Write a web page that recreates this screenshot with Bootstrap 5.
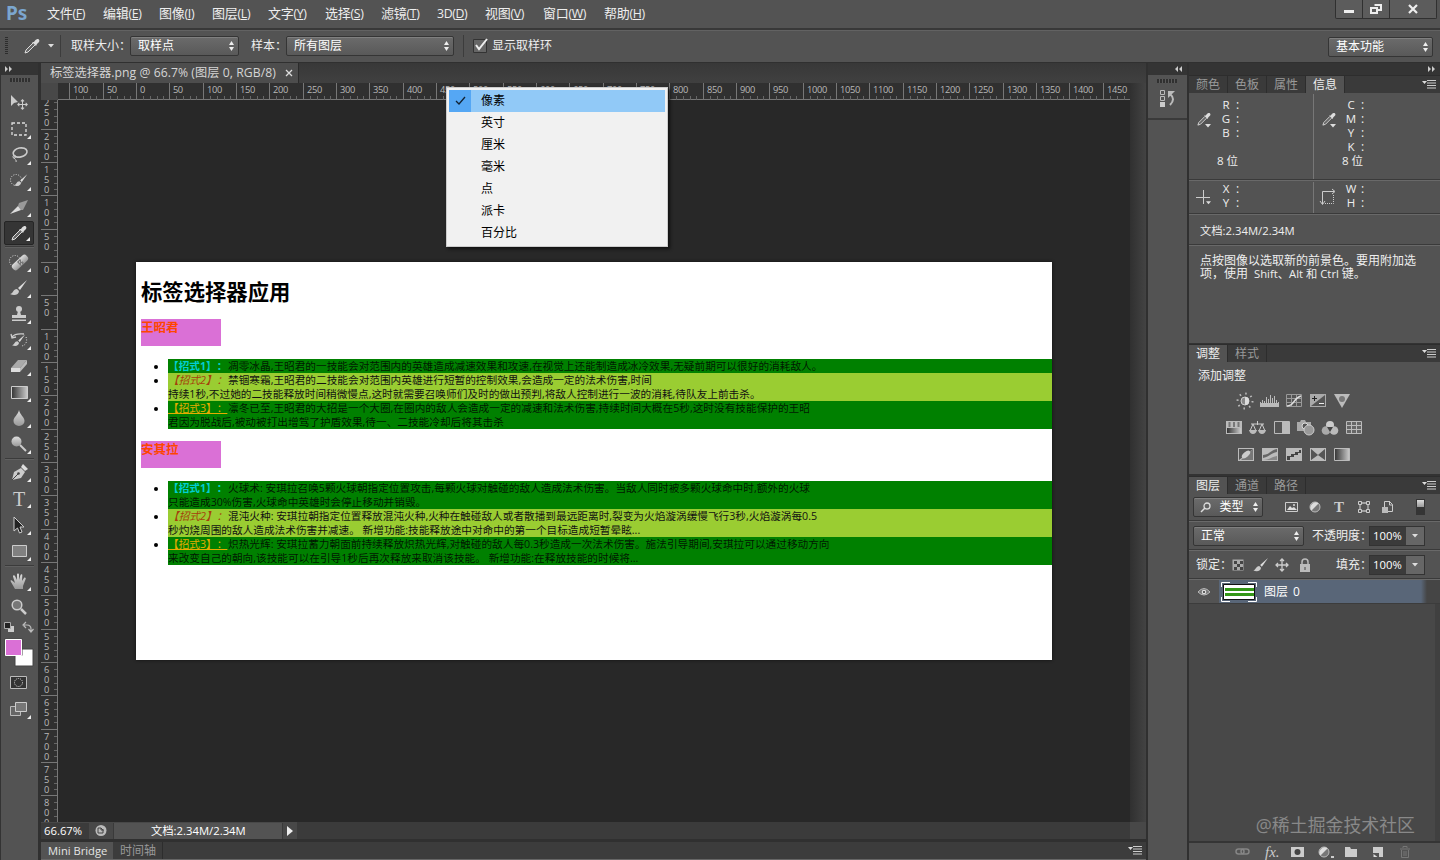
<!DOCTYPE html>
<html lang="zh-CN">
<head>
<meta charset="utf-8">
<meta name="viewport" content="width=device-width, initial-scale=1">
<title>标签选择器.png</title>
<link href="https://cdn.jsdelivr.net/npm/bootstrap@5.3.0/dist/css/bootstrap.min.css" rel="stylesheet">
<style>
body{width:1440px;height:860px;overflow:hidden;background:#535353;color:#eee;font:12px/14px "Open Sans","Noto Sans CJK SC",sans-serif;white-space:nowrap;text-spacing-trim:space-all;font-feature-settings:"chws" 0,"halt" 0}
svg{display:block;flex:none;overflow:visible}
/* menu and options bars */
.menubar{height:28px;padding-left:6px}
.logo{width:41px;color:#7ba6cf;font:bold 19px/26px "Noto Sans",sans-serif}
.menus{display:grid;grid-template-columns:56px 56px 53px 56px 57px 56px 56px 48px 58px 61px 60px;font-size:13px;line-height:26px;letter-spacing:-.2px}
.menus small{font-size:12.3px;letter-spacing:-.4px}
.winbtns{height:19px;border:1px solid #303030;border-top:0;background:#5c5c5c;border-radius:0 0 2px 2px;margin-right:3px}
.winbtns>span{border-right:1px solid #303030;height:18px;width:27px}
.winbtns>span:last-child{width:46px;border:0}
.options{height:35px;border-top:2px solid #383838;border-bottom:1px solid #303030;box-shadow:inset 0 1px #626262}
.selbox{height:20px;border:1px solid #353535;border-radius:2px;background:linear-gradient(#6b6b6b,#595959);box-shadow:inset 0 1px #808080;padding:0 3px 0 7px;display:flex;align-items:center;justify-content:space-between;color:#fff}
.vsep{width:1px;height:22px;background:#3c3c3c}
/* left tool strip */
.strip{width:38px;border-left:1px solid #333}
.striphead{height:12px;background:#343434}
.grip{height:4px;width:20px;background:repeating-linear-gradient(90deg,#303030 0 2px,#5a5a5a 2px 3px)}
.tool{height:26px;width:30px;margin:0 auto 0 3px;display:flex;align-items:center;justify-content:center;position:relative}
.tool::after{content:"";position:absolute;right:3px;bottom:3px;border:2px solid transparent;border-right-color:#eee;border-bottom-color:#eee}
.tool.plain::after{display:none}
.tool.on{background:#353535;border:1px solid #252525;border-radius:2px;height:24px;margin-top:1px;margin-bottom:1px}
.tsep{height:1px;background:#3b3b3b;margin:1px 4px 2px;box-shadow:0 1px #606060}
/* document */
.docwrap{width:1110px;background:#282828;border-left:3px solid #303030;border-right:2px solid #303030}
.tabbar{height:20px;background:linear-gradient(#383838,#404040)}
.doctab{width:258px;height:20px;background:#4d4d4d;border-right:1px solid #2b2b2b;padding:0 6px 0 9px;color:#d5d5d5;font-size:12.2px;letter-spacing:.06px;line-height:20px}
.board{width:1072px;padding:162px 78px 0}
.sheet{height:398px;background:#fff;color:#000;padding:18px 0 0 5px;font-size:10.67px;box-shadow:0 0 3px #111}
.sheet h1{font:bold 21.33px/24px "Open Sans","Noto Sans CJK SC",sans-serif;margin:0 0 15px}
.sheet h3{font:bold 12.5px/18px "Open Sans","Noto Sans CJK SC",sans-serif;margin:0 0 13px;width:80px;height:27px;background:orchid;color:#ff4500}
.sheet ul{margin:0 0 12px;padding-left:27px;line-height:14px}
.sheet li{background:green;color:rgba(0,0,0,.82)}
.sheet li::marker{color:#000}
.sheet li:nth-child(2){background:yellowgreen;color:#111}
.key{display:inline-block;width:60px;height:14px;vertical-align:top}
.sheet li:nth-child(1) .key{color:#00ced1;font-weight:bold}
.sheet li:nth-child(2) .key{color:#a5400c;font-style:italic}
.sheet li:nth-child(3) .key{color:#e5ac00;text-decoration:underline}
.vscroll{width:16px;background:linear-gradient(90deg,#303030,#434343)}
.status{height:17px;background:#484848;font-size:11.3px;color:#fff}
.bottomtabs{height:21px;border-top:3px solid #303030;border-bottom:1px solid #666;background:#3c3c3c;color:#999}
.bottomtabs .act{width:72px;background:#535353;color:#e5e5e5;padding-left:7px;font-size:11.2px;line-height:18px}
/* unit menu */
.unitmenu{left:446px;top:87px;width:222px;height:160px;background:#f1f1f1;border:1px solid #ccc;color:#000;padding:2px;box-shadow:2px 2px 3px #111;z-index:5}
.unitmenu div{height:22px;padding-left:32px;line-height:22px}
.unitmenu .cur{background:linear-gradient(90deg,#55a7f4 22px,#91c9f7 22px);padding-left:0;display:flex;align-items:center}
/* docks */
.dock{width:41px;border-right:2px solid #303030}
.ptabs{height:18px;background:#3a3a3a;border-top:1px solid #2d2d2d;color:#999;line-height:17px}
.ptabs span{width:39px;text-align:center;border-right:1px solid #2d2d2d}
.ptabs .act{background:#535353;color:#eee}
.rule{height:2px;border-top:1px solid #3a3a3a;border-bottom:1px solid #696969}
.half{width:124px}.half+.half{width:127px;border-left:1px solid #777}
.lab{width:14px;text-align:center;font-size:11.5px}
.num{width:56px;height:20px;border:1px solid #333;background:linear-gradient(90deg,#3b3b3b 36px,#666 36px);color:#fff;font-size:11.3px;padding:0 6px 0 3px;display:flex;align-items:center;justify-content:space-between}
.layer{height:24px;background:linear-gradient(90deg,#535353 30px,#596678 30px 232px,#454545 238px);color:#fff;border-bottom:1px solid #3c3c3c}
.mark2{right:25px;bottom:24px;font-size:17.9px;line-height:22px;color:#898989;z-index:3}
</style>
</head>
<body class="d-flex flex-column position-relative">
<svg width="0" height="0" class="position-absolute">
<defs>
<linearGradient id="g" x2="0" y2="1"><stop stop-color="#ddd"/><stop offset="1" stop-color="#999"/></linearGradient>
<linearGradient id="h"><stop stop-color="#333"/><stop offset="1" stop-color="#ccc"/></linearGradient>
<symbol id="ud" viewBox="0 0 7 10"><path d="M3.500 0L6 4H1zM3.500 10L6 6H1z" fill="#eee"/></symbol>
<symbol id="dn" viewBox="0 0 6 4"><path d="M0 0h6L3 3.500z" fill="#ddd"/></symbol>
<symbol id="drop" viewBox="0 0 16 16"><path d="M9 5L2 12 1 15l3-1 7-7" fill="#666" stroke="#ddd"/><path d="M8 4l4 4 1-2 2-2c1-1 0-3-1-3s-2 0-4 3z" fill="#ddd"/></symbol>
<symbol id="brush" viewBox="0 0 18 16"><path d="M17 0L10 10 8 8z" fill="#ddd"/><path d="M0 14c3 0 3-5 7-5l2 2c0 4-5 5-9 3z" fill="#ccc"/></symbol>
<symbol id="move" viewBox="0 0 14 14"><path d="M7 1v12M1 7h12M5 3l2-2 2 2M5 11l2 2 2-2M3 5L1 7l2 2M11 5l2 2-2 2" fill="none" stroke="#ccc" stroke-width="1.300"/></symbol>
<symbol id="pm" viewBox="0 0 14 9"><path d="M0 1h5L2.500 4z" fill="#ddd"/><path d="M5 .5h9M5 3h9M5 5.500h9M5 8h9" stroke="#ccc"/></symbol>
<symbol id="half" viewBox="0 0 12 12"><circle cx="6" cy="6" r="5" fill="#777" stroke="#bbb"/><path d="M2.500 9.500A5 5 0 0 1 9.500 2.500z" fill="#ddd"/></symbol>
</defs></svg>

<nav class="menubar d-flex">
 <div class="logo">Ps</div>
 <div class="menus">
  <span>文件<small>(<u>F</u>)</small></span><span>编辑<small>(<u>E</u>)</small></span><span>图像<small>(<u>I</u>)</small></span><span>图层<small>(<u>L</u>)</small></span><span>文字<small>(<u>Y</u>)</small></span><span>选择<small>(<u>S</u>)</small></span><span>滤镜<small>(<u>T</u>)</small></span><span><small>3D(<u>D</u>)</small></span><span>视图<small>(<u>V</u>)</small></span><span>窗口<small>(<u>W</u>)</small></span><span>帮助<small>(<u>H</u>)</small></span>
 </div>
 <div class="winbtns d-flex ms-auto">
  <span class="d-flex align-items-center justify-content-center"><svg width="10" height="3" class="mt-1"><path d="M0 0h10v3H0z" fill="#eee"/></svg></span>
  <span class="d-flex align-items-center justify-content-center"><svg width="12" height="10"><path d="M4.500 1h6.500v5H8M1 4h6v5H1z" fill="none" stroke="#eee" stroke-width="2"/></svg></span>
  <span class="d-flex align-items-center justify-content-center"><svg width="10" height="8"><path d="M1 0l8 8M9 0L1 8" stroke="#eee" stroke-width="2.200"/></svg></span>
 </div>
</nav>

<div class="options d-flex align-items-center">
 <div style="width:24px"><svg width="8" height="20"><path d="M6.500 1v18" stroke="#2d2d2d" stroke-width="3" stroke-dasharray="1 1"/></svg></div>
 <svg width="16" height="16"><use href="#drop"/></svg>
 <svg width="6" height="4" style="margin-left:8px"><use href="#dn"/></svg>
 <i class="vsep" style="margin-left:6px"></i>
 <span style="width:69px;padding-left:10px">取样大小：</span>
 <div class="selbox" style="width:109px"><span>取样点</span><svg width="7" height="10"><use href="#ud"/></svg></div>
 <span style="width:47px;padding-left:12px">样本：</span>
 <div class="selbox" style="width:168px"><span>所有图层</span><svg width="7" height="10"><use href="#ud"/></svg></div>
 <i class="vsep" style="margin:0 9px"></i>
 <svg width="15" height="14"><path d="M.5.500h13v13H.500z" fill="#666" stroke="#333"/><path d="M3 6l3 4 8-10" fill="none" stroke="#eee" stroke-width="2"/></svg>
 <span style="margin-left:4px">显示取样环</span>
 <div class="selbox ms-auto" style="width:105px;margin-right:7px;margin-top:1px"><span>基本功能</span><svg width="7" height="10"><use href="#ud"/></svg></div>
</div>

<main class="d-flex flex-grow-1" style="height:797px">
 <aside class="strip">
  <div class="striphead"><svg width="12" height="12"><path d="M4 3l3 3-3 3zM8 3l3 3-3 3z" fill="#ccc"/></svg></div>
  <div class="grip" style="margin:3px 0 8px 9px"></div>
  <div class="tool plain"><svg width="18" height="16"><path d="M1 0v11l3-3 4-1z" fill="#ccc"/><use href="#move" x="7" y="4" width="11" height="11"/></svg></div>
  <div class="tool"><svg width="16" height="14"><path d="M1 1h14v12H1z" fill="none" stroke="#ddd" stroke-width="1.300" stroke-dasharray="3 2"/></svg></div>
  <div class="tool"><svg width="17" height="16"><ellipse cx="9" cy="5.500" rx="7" ry="4.500" transform="rotate(-12 9 5)" fill="none" stroke="#ccc" stroke-width="1.600"/><path d="M3 8c-3 3 1 4 2 2s-3-1-2 1 3 2 2 4" fill="none" stroke="#ccc"/></svg></div>
  <div class="tool"><svg width="18" height="16"><circle cx="6" cy="7" r="5.500" fill="none" stroke="#ddd" stroke-dasharray="1 1.500"/><use href="#brush" x="4" y="1" width="14" height="13"/></svg></div>
  <div class="tool"><svg width="18" height="15"><path d="M18 0L9 3l-1 3 3 4h2z" fill="#999"/><path d="M0 14L8 6l3 4z" fill="#ddd"/></svg></div>
  <div class="tool on"><svg width="16" height="16"><use href="#drop"/></svg></div>
  <div class="tsep"></div>
  <div class="tool"><svg width="20" height="16"><circle cx="6" cy="7" r="5.500" fill="none" stroke="#ddd" stroke-dasharray="1 1.500"/><rect x="1.500" y="5" width="19" height="7" rx="3" fill="url(#g)" transform="rotate(-43 11 8.500)"/><path d="M8 8l3-3 4 4-3 3z" fill="#777"/><path d="M10 8h1M12 7h1M12 10h1" stroke="#eee"/></svg></div>
  <div class="tool"><svg width="18" height="16"><use href="#brush" width="18" height="16"/></svg></div>
  <div class="tool"><svg width="16" height="16"><circle cx="8" cy="3" r="3" fill="#ccc"/><path d="M7 5h2l1 4h5v3H1V9h5zM1 13.500h14v1.500H1z" fill="#ccc"/></svg></div>
  <div class="tool"><svg width="18" height="16"><use href="#brush" x="2" y="2" width="14" height="13"/><path d="M2 5c3-4 8-3 12-3M1 2l1 4 4-1" fill="none" stroke="#ccc" stroke-width="1.300"/><path d="M16 5c2 5-1 9-5 9" fill="none" stroke="#ddd" stroke-dasharray="1 1.500"/></svg></div>
  <div class="tool"><svg width="18" height="14"><path d="M8 1h9l-7 8H1z" fill="#aaa"/><path d="M1 9h9v4H1z" fill="#ddd"/><path d="M10 9l7-8v4l-7 8z" fill="#bbb"/></svg></div>
  <div class="tool"><svg width="17" height="13"><path d="M.5.500h16v12H.500z" fill="url(#h)" stroke="#ccc"/></svg></div>
  <div class="tool"><svg width="12" height="16"><path d="M6 0c1 5 5.500 7 5.500 11a5.500 5 0 0 1-11 0C.5 7 5 5 6 0z" fill="url(#g)"/></svg></div>
  <div class="tool"><svg width="16" height="16"><circle cx="5.500" cy="5.500" r="5" fill="url(#g)"/><path d="M9 9l6 6" stroke="#ccc" stroke-width="2"/></svg></div>
  <div class="tsep" style="margin-bottom:0"></div>
  <div class="tool"><svg width="17" height="17"><path d="M1 16L3 8l7-4 4 4-4 6z" fill="#ccc"/><path d="M10 3l2-3 5 5-3 2z" fill="#ddd"/><path d="M1 16l6-6" stroke="#444"/><circle cx="7.500" cy="9.500" r="1.300" fill="#444"/></svg></div>
  <div class="tool mt-0"><span style="font:20px/24px 'Liberation Serif',serif;color:#ccc;padding-top:2px">T</span></div>
  <div class="tool" style="margin-top:1px"><svg width="12" height="18"><path d="M1 1v14l3.500-3 2 5 2.500-1-2-5h4z" fill="#222" stroke="#ccc"/></svg></div>
  <div class="tool"><svg width="15" height="12"><path d="M.5.500h14v11H.500z" fill="#808080" stroke="#ccc"/></svg></div>
  <div class="tsep" style="margin:1px 4px 2px"></div>
  <div class="tool"><svg width="18" height="17"><path d="M5 16L1 9c-1-2 0-2 1-1.500L5 10 3 3.500C3 2 4.500 2 5 3l2 4V1.500C7 0 9 0 9 1.500V7l1.500-5C11 1 12.500 1 12.300 2.500L12 8l2-3c1-1 2.300 0 1.500 1.500L13 13v3z" fill="url(#g)"/></svg></div>
  <div class="tool plain"><svg width="16" height="16"><circle cx="6" cy="6" r="4.800" fill="#777" stroke="#ccc" stroke-width="1.500"/><path d="M10 10l5 5" stroke="#ccc" stroke-width="2.500"/></svg></div>
  <div class="d-flex justify-content-between" style="padding:2px 5px 0 3px"><svg width="10" height="10"><path d="M4 4h6v6H4z" fill="#ccc"/><path d="M.5.500h6v6h-6z" fill="#222" stroke="#aaa"/></svg><svg width="10" height="10"><path d="M1 3h3q4 0 4 4v2M3 0L0 3l3 3M5.500 7L8 10l2.500-3" fill="none" stroke="#bbb" stroke-width="1.200"/></svg></div>
  <svg width="32" height="32" style="margin:6px 0 0 3px"><path d="M11 11h18v17H11z" fill="#fff" stroke="#444"/><path d="M.5.500h18v17H.500z" fill="#444"/><path d="M1.500 1.500h16v16h-16z" fill="#da70d6" stroke="#fff"/></svg>
  <div class="tool plain" style="margin-top:-1px"><svg width="17" height="13" style="margin-left:-2px"><path d="M.5.500h16v12H.500z" fill="#333" stroke="#bbb"/><circle cx="8.500" cy="6.500" r="4" fill="none" stroke="#ddd" stroke-dasharray="1 1"/></svg></div>
  <div class="tool" style="margin-top:1px"><svg width="17" height="14" style="margin-left:-1px"><path d="M.5 4.500h10v9H.500z" fill="#666" stroke="#bbb"/><path d="M5.500.500h11v9h-11z" fill="#777" stroke="#ccc"/></svg></div>
 </aside>

 <section class="docwrap d-flex flex-column">
  <div class="tabbar"><div class="doctab d-flex justify-content-between align-items-center"><span>标签选择器.png @ 66.7% (图层 0, RGB/8)</span><svg width="6" height="6"><path d="M0 0l6 6M6 0L0 6" stroke="#ddd" stroke-width="1.300"/></svg></div></div>
  <div class="d-flex" style="height:739px">
   <svg id="vr" width="17" height="739"></svg>
   <div style="width:1072px">
    <svg id="hr" width="1072" height="17"></svg>
    <div class="board">
     <article class="sheet">
      <h1>标签选择器应用</h1>
      <h3>王昭君</h3>
      <ul>
       <li><span class="key">【招式1】：</span>凋零冰晶,王昭君的一技能会对范围内的英雄造成减速效果和攻速,在视觉上还能制造成冰冷效果,无疑前期可以很好的消耗敌人。</li>
       <li><span class="key">【招式2】：</span>禁锢寒霜,王昭君的二技能会对范围内英雄进行短暂的控制效果,会造成一定的法术伤害,时间<br>持续1秒,不过她的二技能释放时间稍微慢点,这时就需要召唤师们及时的做出预判,将敌人控制进行一波的消耗,待队友上前击杀。</li>
       <li><span class="key">【招式3】：</span>凛冬已至,王昭君的大招是一个大圈,在圈内的敌人会造成一定的减速和法术伤害,持续时间大概在5秒,这时没有技能保护的王昭<br>君因为脱战后,被动被打出增驾了护盾效果,待一、二技能冷却后将其击杀</li>
      </ul>
      <h3>安其拉</h3>
      <ul>
       <li><span class="key">【招式1】：</span>火球术: 安琪拉召唤5颗火球朝指定位置攻击,每颗火球对触碰的敌人造成法术伤害。当敌人同时被多颗火球命中时,额外的火球<br>只能造成30%伤害,火球命中英雄时会停止移动并销毁。</li>
       <li><span class="key">【招式2】：</span>混沌火种: 安琪拉朝指定位置释放混沌火种,火种在触碰敌人或者散播到最远距离时,裂变为火焰漩涡缓慢飞行3秒,火焰漩涡每0.5<br>秒灼烧周围的敌人造成法术伤害并减速。 新增功能:技能释放途中对命中的第一个目标造成短暂晕眩...</li>
       <li><span class="key">【招式3】：</span>炽热光辉: 安琪拉蓄力朝面前持续释放炽热光辉,对触碰的敌人每0.3秒造成一次法术伤害。施法引导期间,安琪拉可以通过移动方向<br>来改变自己的朝向,该技能可以在引导1秒后再次释放来取消该技能。 新增功能:在释放技能的时候将...</li>
      </ul>
     </article>
    </div>
   </div>
   <div class="vscroll"></div>
  </div>
  <div class="status d-flex align-items-center">
   <span style="width:48px;padding-left:3px;background:#3b3b3b;line-height:16px">66.67%</span>
   <svg width="24" height="17"><circle cx="12" cy="8.500" r="5.500" fill="#bbb"/><path d="M9 6h3l2 2v3H9zM12 6v2h3" fill="none" stroke="#444"/></svg>
   <span style="width:170px;padding-left:37px;border:solid #3a3a3a;border-width:0 1px;background:#535353;line-height:16px">文档:2.34M/2.34M</span>
   <svg width="14" height="17"><path d="M4 4l6 5-6 5z" fill="#eee"/></svg>
   <span style="height:17px;width:833px;background:#3b3b3b"></span>
  </div>
  <div class="bottomtabs d-flex"><span class="act">Mini Bridge</span><span style="padding-left:7px;width:50px;border-right:1px solid #2d2d2d;line-height:17px">时间轴</span><svg class="ms-auto mt-1" width="14" height="9" style="margin-right:4px"><use href="#pm"/></svg></div>
 </section>

 <aside class="dock">
  <div class="striphead text-end"><svg width="10" height="12" class="ms-auto me-1"><path d="M5 3L2 6l3 3zM9 3L6 6l3 3z" fill="#ccc"/></svg></div>
  <div style="height:41px;border-bottom:2px solid #3a3a3a"><div class="grip" style="margin:4px 0 7px 9px"></div><svg width="18" height="18" style="margin-left:12px"><path d="M.5.500h4v4h-4zM.5 6.500h4v4h-4z" fill="none" stroke="#bbb"/><path d="M0 12h5v5H0z" fill="#ccc"/><path d="M10 4q6 5 0 11" fill="none" stroke="#bbb" stroke-width="2"/><path d="M8 1h7L8 8z" fill="#bbb"/></svg></div>
 </aside>

 <aside style="width:251px" class="d-flex flex-column">
  <div class="striphead"><svg width="12" height="12" class="ms-auto me-1"><path d="M4 3l3 3-3 3zM8 3l3 3-3 3z" fill="#ccc"/></svg></div>
  <div class="ptabs d-flex"><span>颜色</span><span>色板</span><span>属性</span><span class="act">信息</span><svg class="ms-auto mt-1" width="14" height="9" style="margin-right:4px"><use href="#pm"/></svg></div>
  <div class="d-flex" style="height:85px;margin-top:1px">
   <div class="half d-flex pt-1"><svg width="30" height="16" style="margin-top:14px"><use href="#drop" x="8" y="0" width="14" height="14"/><use href="#dn" x="16" y="12" width="6" height="4"/></svg><div class="lab">R<br>G<br>B<br><br><div style="margin-left:-2px">8&nbsp;位</div></div><div style="padding-left:3px">:<br>:<br>:</div></div>
   <div class="half d-flex pt-1"><svg width="30" height="16" style="margin-top:14px"><use href="#drop" x="8" y="0" width="14" height="14"/><use href="#dn" x="16" y="12" width="6" height="4"/></svg><div class="lab">C<br>M<br>Y<br>K<br><div style="margin-left:-2px">8&nbsp;位</div></div><div style="padding-left:3px">:<br>:<br>:<br>:</div></div>
  </div>
  <div class="rule"></div>
  <div class="d-flex" style="height:31px;margin-top:1px">
   <div class="half d-flex"><svg width="30" height="30"><path d="M7 15.500h14M14.500 8v14" stroke="#ccc"/><use href="#dn" x="17" y="19" width="5" height="4"/></svg><div class="lab">X<br>Y</div><div style="padding-left:3px">:<br>:</div></div>
   <div class="half d-flex"><svg width="30" height="30"><path d="M8.500 22V9.500H20M6 19l2.500 3.500L11 19M18 7l3 2.500-3 2.500" fill="none" stroke="#ccc"/><path d="M19.500 13v8.500H11" fill="none" stroke="#ccc" stroke-dasharray="1 1"/></svg><div class="lab">W<br>H</div><div style="padding-left:3px">:<br>:</div></div>
  </div>
  <div class="rule"></div>
  <div style="height:29px;padding:9px 0 0 11px;font-size:11.3px">文档:2.34M/2.34M</div>
  <div class="rule"></div>
  <div style="height:97px;padding:8px 0 0 11px;line-height:13px">点按图像以选取新的前景色。要用附加选<br>项，使用<span style="font-size:11.3px;padding-left:3px"> Shift、Alt 和 Ctrl </span>键。</div>
  <div style="height:1px;background:#333"></div>
  <div class="ptabs d-flex"><span class="act">调整</span><span>样式</span><svg class="ms-auto mt-1" width="14" height="9" style="margin-right:4px"><use href="#pm"/></svg></div>
  <div style="height:112px;padding:7px 0 0 9px">添加调整
   <div class="d-flex flex-column" style="margin-top:11px;gap:13px">
    <svg width="120" height="14" style="margin-left:38px">
     <circle cx="9" cy="7" r="4" fill="#888" stroke="#ccc"/><path d="M9 3a4 4 0 0 1 0 8z" fill="#ddd"/><circle cx="9" cy="7" r="7.500" fill="none" stroke="#bbb" stroke-width="2" stroke-dasharray="1.500 4.390"/>
     <path d="M24.500 13V8M26.500 13V6M28.500 13V7M30.500 13V3M32.500 13V5M34.500 13V1M36.500 13V4M38.500 13V2M40.500 13V6M42.500 13V8" stroke="#bbb"/><path d="M24 9h19v4H24z" fill="#bbb"/>
     <path d="M50.500.500h15v12h-15zM55.500 0v13M60.500 0v13M50 4.500h16M50 8.500h16" stroke="#999" fill="none"/><path d="M51 12c8 0 6-8 14-10" stroke="#ddd" stroke-width="1.500" fill="none"/>
     <path d="M74 0h16v13H74z" fill="#aaa"/><path d="M75 12L89 1v11z" fill="#555"/><path d="M76 4.500h5M78.500 2v5" stroke="#222"/><path d="M83 9.500h5" stroke="#eee"/>
     <path d="M98 0h16l-8 14z" fill="#bbb"/><circle cx="106" cy="5" r="3" fill="#777"/>
    </svg>
    <svg width="140" height="14" style="margin-left:28px">
     <path d="M0 0h16v13H0z" fill="#bbb"/><path d="M1 7h14v5H1z" fill="url(#h)"/><path d="M3.500 1v5M8 1v5M12.500 1v5" stroke="#777" stroke-width="2"/>
     <path d="M31.500 0v4M25 3h13M27 3l-3 7M27 3l3 7M36 3l-3 7M36 3l3 7" stroke="#ccc" fill="none"/><path d="M23 9h8q-1 4-4 4t-4-4zM32 9h8q-1 4-4 4t-4-4z" fill="#bbb"/>
     <path d="M48.500.500h15v12h-15z" fill="#555" stroke="#bbb"/><path d="M56 1h8v12h-8z" fill="#bbb"/>
     <path d="M71 1h3l1-2h4l1 2h5v9H71z" fill="#aaa"/><circle cx="79" cy="5" r="3" fill="#555" stroke="#ddd"/><circle cx="83" cy="9" r="5" fill="#999" stroke="#ccc"/>
     <circle cx="104" cy="4" r="4" fill="#ccc"/><circle cx="100" cy="9.500" r="4.300" fill="#aaa"/><circle cx="108" cy="9.500" r="4.300" fill="#bbb"/><path d="M101 6h6l-3 5z" fill="#444"/>
     <path d="M120.500.500h15v12h-15zM125.500 0v13M130.500 0v13M120 4.500h16M120 8.500h16" stroke="#bbb" fill="#666"/>
    </svg>
    <svg width="120" height="14" style="margin-left:40px">
     <path d="M0 0h16v13H0zM24 0h16v13H24zM48 0h16v13H48zM72 0h16v13H72z" fill="#bbb"/>
     <path d="M1 1h14L1 12z" fill="#555"/><path d="M15 1v11H3z" fill="#777"/><ellipse cx="8" cy="6.500" rx="5" ry="2.500" transform="rotate(-40 8 6.500)" fill="#ccc"/>
     <path d="M25 7c6 0 8-5 14-6v3c-6 1-8 5-14 6z" fill="#666"/><path d="M25 12c6 0 8-3 14-4v4z" fill="#888"/>
     <path d="M49 8h4V6h4V4h4V2h2v3h-3v2h-4v2h-4v3h-3z" fill="#444"/>
     <path d="M73 1l7 6 7-6v11l-7-5-7 5z" fill="#999"/><path d="M73 1l7 6-7 5zM87 1v11l-7-5z" fill="#555"/>
     <path d="M96.500.500h15v12h-15z" fill="url(#h)" stroke="#bbb"/>
    </svg>
   </div>
  </div>
  <div style="height:2px;background:#333"></div>
  <div class="ptabs d-flex"><span class="act">图层</span><span>通道</span><span>路径</span><svg class="ms-auto mt-1" width="14" height="9" style="margin-right:4px"><use href="#pm"/></svg></div>
  <div class="d-flex align-items-center" style="height:26px;padding-left:4px">
   <div class="selbox" style="width:70px"><svg width="10" height="10"><circle cx="6" cy="4" r="3" fill="none" stroke="#ddd" stroke-width="1.300"/><path d="M4 6L0 10" stroke="#ddd" stroke-width="1.500"/></svg><span>类型</span><svg width="7" height="10"><use href="#ud"/></svg></div>
   <svg width="150" height="16">
    <path d="M22.500 3.500h12v9h-12z" fill="#555" stroke="#ccc"/><path d="M24 11l3-4 2 2 2-1 3 3z" fill="#ddd"/><circle cx="31" cy="6" r="1" fill="#ddd"/>
    <use href="#half" x="46" y="2" width="12" height="12"/>
    <text x="71" y="13" font-family="Liberation Serif,serif" font-size="15" font-weight="bold" fill="#ccc">T</text>
    <path d="M97 4h8v8h-8z" fill="none" stroke="#bbb" stroke-width="1.300"/><path d="M95.500 2.500h3v3h-3zM103.500 2.500h3v3h-3zM95.500 10.500h3v3h-3zM103.500 10.500h3v3h-3z" fill="#555" stroke="#ccc"/>
    <path d="M121.500 8V2.500h5l3 3v7H125M126.500 2v4h3" fill="none" stroke="#ccc"/><path d="M119 8h6v6h-6z" fill="#bbb"/>
    <path d="M153 0h9v16h-9z" fill="#353535"/><path d="M154 1h7v7h-7z" fill="url(#g)"/>
   </svg>
  </div>
  <div class="rule"></div>
  <div class="d-flex align-items-center" style="height:27px;padding-left:4px"><div class="selbox" style="width:111px"><span>正常</span><svg width="7" height="10"><use href="#ud"/></svg></div><span style="width:65px;padding-left:8px">不透明度：</span><div class="num"><span>100%</span><svg width="6" height="4"><use href="#dn"/></svg></div></div>
  <div class="rule"></div>
  <div class="d-flex align-items-center" style="height:27px;padding-left:7px"><span style="width:36px">锁定：</span>
   <svg width="104" height="14"><path d="M.5 1.500h11v11H.500z" fill="#aaa"/><path d="M2 3h3v3H2zM8 3h3v3H8zM5 6h3v3H5zM2 9h3v3H2zM8 9h3v3H8z" fill="#444"/><use href="#brush" x="21" y="0" width="16" height="14"/><use href="#move" x="43" y="0" width="14" height="14"/><path d="M68 6h10v8H68z" fill="#bbb"/><path d="M70 6V4a3 3 0 0 1 6 0v2" fill="none" stroke="#bbb" stroke-width="1.500"/><path d="M73 9v3" stroke="#444"/></svg>
   <span style="width:33px">填充：</span><div class="num"><span>100%</span><svg width="6" height="4"><use href="#dn"/></svg></div></div>
  <div class="rule"></div>
  <div class="layer d-flex align-items-center">
   <svg width="32" height="12"><path d="M9 6q6-7 12 0-6 6-12 0z" fill="#777" stroke="#bbb"/><circle cx="15" cy="6" r="2.300" fill="#ddd"/><circle cx="15" cy="6" r="1" fill="#333"/></svg>
   <svg width="36" height="20"><path d="M.5 5V.500H9M27 .5h8.500V5M35.500 15v4.500H27M9 19.500H.500V15" fill="none" stroke="#fff"/><path d="M2.500 2.500h31v15h-31z" fill="#fff" stroke="#111"/><path d="M4 6h29v3H4zM4 11h29v3H4z" fill="#339617"/></svg>
   <span style="margin-left:7px;word-spacing:2px">图层 0</span>
  </div>
  <div class="flex-grow-1" style="background:#484848;box-shadow:inset -5px 0 #404040"></div>
  <div style="height:19px;border-top:2px solid #353535" class="d-flex align-items-center">
   <svg width="245" height="14"><g fill="none" stroke="#858585" stroke-width="1.500"><rect x="47" y="4" width="8" height="5" rx="2.500"/><rect x="52" y="4" width="8" height="5" rx="2.500"/></g><text x="76" y="12" font-family="Liberation Serif,serif" font-style="italic" font-size="15" fill="#ccc">fx.</text><path d="M102 2h13v10h-13z" fill="#ccc"/><circle cx="108.500" cy="7" r="3" fill="#444"/><use href="#half" x="129" y="1" width="12" height="12"/><path d="M142 11h3v2h-3zM156 2h5l1 2h6v8h-12z" fill="#ccc"/><path d="M184 2h10v10h-4V8h-6z" fill="#ccc"/><path d="M184.500 9v3h4z" fill="#ddd"/><path d="M211 4h10M214 3V1.500h4V3M212.500 5v7.500h7V5M215 6v5M217 6v5" stroke="#777" fill="none"/></svg>
  </div>
 </aside>
</main>

<div class="unitmenu position-absolute">
 <div class="cur"><svg width="22" height="22"><path d="M7 11l3 3 6-7" fill="none" stroke="#123" stroke-width="1.300"/></svg><span style="margin-left:10px">像素</span></div>
 <div>英寸</div><div>厘米</div><div>毫米</div><div>点</div><div>派卡</div><div>百分比</div>
</div>
<div class="mark2 position-absolute">@稀土掘金技术社区</div>

<script src="https://cdn.jsdelivr.net/npm/bootstrap@5.3.0/dist/js/bootstrap.bundle.min.js"></script>
<script>
// Rulers: 50 document pixels are 33.33 screen pixels at 66.7% zoom
const step = 100 / 3;
const font = 'font-family="Open Sans" font-size="9.3" fill="#b8b8b8"';
let h = '<rect width="1072" height="17" fill="#303030"/><path d="M0 16.500H1072" stroke="#777"/>';
for (let i = -2; i < 30; i++) {
  const x = Math.round(78 + i * step) + .5;
  h += `<path d="M${x} 0V17" stroke="#777"/>`;
  for (let k = 1; k < 5; k++) h += `<path d="M${Math.round(x + k * step / 5) + .5} ${13}V17" stroke="#666"/>`;
  const t = String(Math.abs(i * 50));
  h += `<text x="${x + 3.5}" y="10" textLength="${t.length * 5.1}" ${font}>${t}</text>`;
}
document.getElementById('hr').innerHTML = h;
let v = '<rect width="17" height="739" fill="#303030"/>';
for (let i = -5; i < 17; i++) {
  const y = Math.round(179 + i * step) + .5;
  v += `<path d="M0 ${y}H17" stroke="#777"/>`;
  for (let k = 1; k < 5; k++) v += `<path d="M13 ${Math.round(y + k * step / 5) + .5}H17" stroke="#666"/>`;
  [...String(Math.abs(i * 50))].forEach((c, n) => { v += `<text x="3" y="${y + 10.5 + n * 10}" ${font}>${c}</text>`; });
}
v += '<path d="M16.500 17V739" stroke="#777"/><rect width="17" height="17" fill="#484848"/>';
const vr = document.getElementById('vr');
vr.style.overflow = 'hidden';
vr.innerHTML = v;
document.getElementById('hr').style.overflow = 'hidden';
</script>
</body>
</html>
